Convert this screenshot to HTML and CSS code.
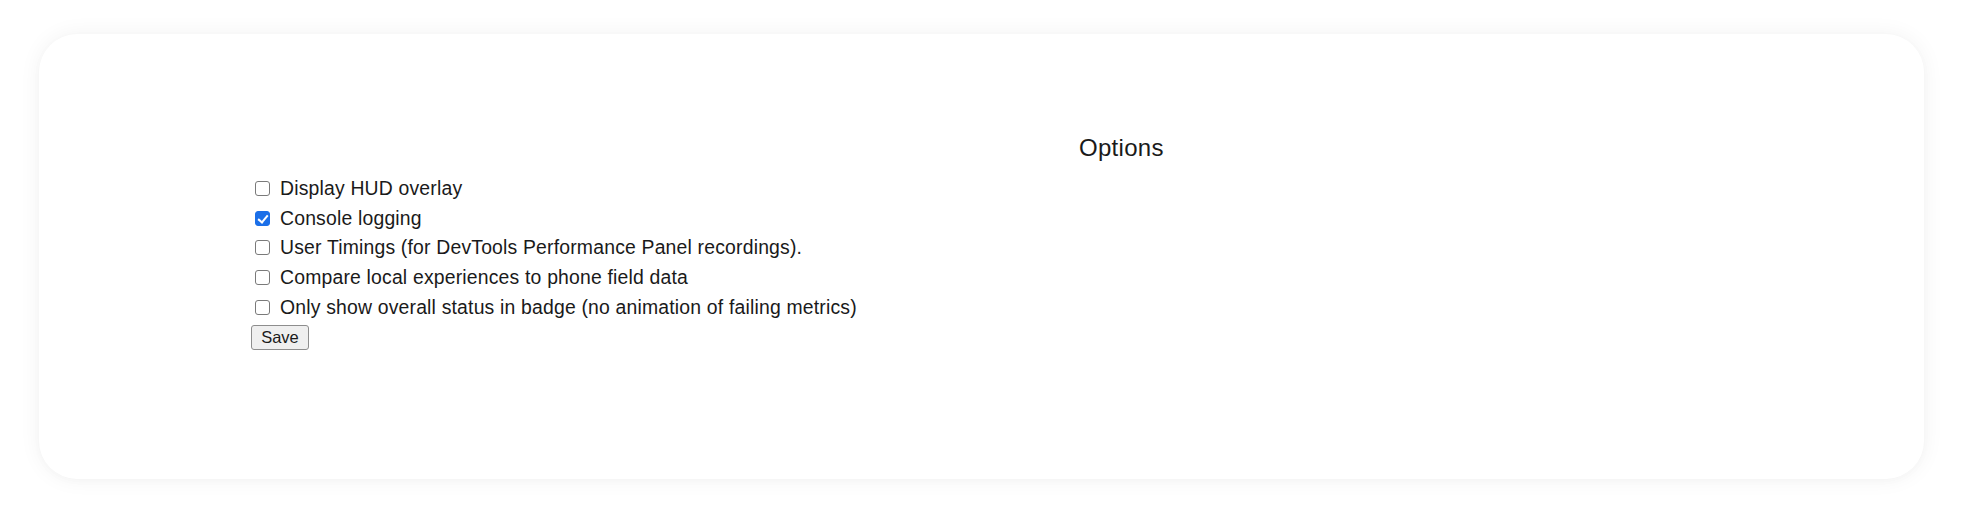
FILE: index.html
```html
<!DOCTYPE html>
<html>
<head>
<meta charset="utf-8">
<link rel="stylesheet" href="styles.css">
</head>
<body>
<div class="card">
  <div class="content">
    <h1 class="title">Options</h1>
    <div class="options">
      <label class="row"><input type="checkbox" class="cb"><span class="lbl">Display HUD overlay</span></label>
      <label class="row"><input type="checkbox" class="cb" checked><span class="lbl">Console logging</span></label>
      <label class="row"><input type="checkbox" class="cb"><span class="lbl">User Timings (for DevTools Performance Panel recordings).</span></label>
      <label class="row"><input type="checkbox" class="cb"><span class="lbl">Compare local experiences to phone field data</span></label>
      <label class="row"><input type="checkbox" class="cb"><span class="lbl">Only show overall status in badge (no animation of failing metrics)</span></label>
    </div>
    <button class="save">Save</button>
  </div>
</div>
</body>
</html>
```

FILE: styles.css
```css
html, body {
  margin: 0;
  padding: 0;
  background: #ffffff;
}
body {
  font-family: "Liberation Sans", Arial, Helvetica, sans-serif;
  color: #1a1a1a;
  padding: 34px 39px 43px 39px;
}
.card {
  height: 445px;
  box-sizing: border-box;
  background: #ffffff;
  border-radius: 38px;
  box-shadow: 0 0 22px rgba(0, 0, 0, 0.055), 0 2px 8px rgba(0, 0, 0, 0.02);
  padding: 101px 0 0 212px;
}
.content {
  display: flex;
  flex-direction: column;
  align-items: flex-start;
}
.title {
  margin: 0 0 13px 828px;
  font-size: 24px;
  letter-spacing: 0.3px;
  font-weight: normal;
  line-height: 26.5px;
  color: #1a1a1a;
}
.options {
  display: flex;
  flex-direction: column;
}
.row {
  display: flex;
  align-items: center;
  height: 29.75px;
  font-size: 19.4px;
  letter-spacing: 0.18px;
}
.cb {
  appearance: none;
  -webkit-appearance: none;
  position: relative;
  box-sizing: border-box;
  width: 15px;
  height: 15px;
  margin: 0 10px 2px 4px;
  border: 1px solid #7a7a7a;
  border-radius: 3px;
  background: #ffffff;
  flex: none;
}
.cb:checked {
  background: #1b6fe8;
  border-color: #1b6fe8;
}
.cb:checked::after {
  content: "";
  position: absolute;
  left: 4px;
  top: 1px;
  width: 4px;
  height: 8px;
  border: solid #ffffff;
  border-width: 0 2px 2px 0;
  transform: rotate(40deg);
}
.lbl {
  line-height: 22px;
  padding-bottom: 3px;
}
.save {
  margin-top: 2px;
  width: 58px;
  height: 25px;
  font-family: "Liberation Sans", Arial, Helvetica, sans-serif;
  font-size: 16.5px;
  color: #1a1a1a;
  background: #efefef;
  border: 1px solid #8d8d8d;
  border-radius: 3px;
  padding: 0;
}
```
